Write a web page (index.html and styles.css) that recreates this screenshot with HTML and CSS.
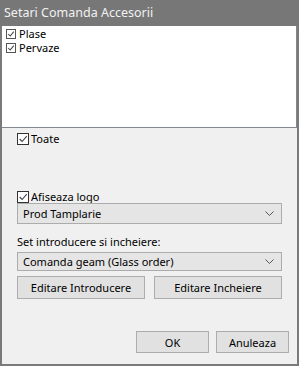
FILE: index.html
```html
<!DOCTYPE html>
<html lang="ro">
<head>
    <meta charset="UTF-8">
    <title>Setari Comanda Accesorii</title>
    <link rel="stylesheet" href="styles.css">
</head>
<body>
    <div class="window">
        <div class="titlebar">Setari Comanda Accesorii</div>
        <div class="list">
            <div class="item"><span class="box small"><svg viewBox="0 0 10 10"><polyline points="1.5,5 4,7.5 8.5,2"/></svg></span>Plase</div>
            <div class="item"><span class="box small"><svg viewBox="0 0 10 10"><polyline points="1.5,5 4,7.5 8.5,2"/></svg></span>Pervaze</div>
        </div>
        <div class="panel">
            <div class="check toate"><span class="box"><svg viewBox="0 0 12 12"><polyline points="2,6 5,9 10.5,2.5"/></svg></span>Toate</div>
            <div class="check logo"><span class="box"><svg viewBox="0 0 12 12"><polyline points="2,6 5,9 10.5,2.5"/></svg></span>Afiseaza logo</div>
            <div class="combo"><span>Prod Tamplarie</span><svg class="arrow" viewBox="0 0 9 5"><polyline points="0.5,0.5 4.5,4.5 8.5,0.5"/></svg></div>
            <div class="label">Set introducere si incheiere:</div>
            <div class="combo second"><span>Comanda geam (Glass order)</span><svg class="arrow" viewBox="0 0 9 5"><polyline points="0.5,0.5 4.5,4.5 8.5,0.5"/></svg></div>
            <div class="btnrow">
                <button class="btn wide">Editare Introducere</button>
                <button class="btn wide">Editare Incheiere</button>
            </div>
            <div class="footer">
                <button class="btn small-btn">OK</button>
                <button class="btn small-btn">Anuleaza</button>
            </div>
        </div>
    </div>
</body>
</html>
```

FILE: styles.css
```css
html, body{
    margin:0;
    padding:0;
}
body{
    font-family:"Noto Sans", "Open Sans", sans-serif;
    font-size:11px;
    color:#000;
}
.window{
    box-sizing:border-box;
    width:299px;
    height:366px;
    background:#f0f0f0;
    border-left:2px solid #7a7a7a;
    border-right:2px solid #7a7a7a;
    border-bottom:2px solid #7a7a7a;
    display:flex;
    flex-direction:column;
}
.titlebar{
    height:26px;
    margin:0 -2px;
    padding-left:4px;
    background:#777777;
    color:#f2f2f2;
    line-height:26px;
    font-size:12.5px;
}
.list{
    box-sizing:border-box;
    height:102px;
    background:#fff;
    border-right:1px solid #828790;
    border-bottom:1px solid #828790;
    padding-top:1px;
    padding-left:4px;
}
.item{
    display:flex;
    align-items:center;
    height:14px;
    line-height:14px;
}
.box{
    box-sizing:border-box;
    width:12px;
    height:12px;
    border:1px solid #333;
    background:#fff;
    margin-right:2px;
    display:flex;
}
.box.small{
    width:10px;
    height:10px;
    border-color:#555;
    margin-right:3px;
}
.box svg{
    width:100%;
    height:100%;
    fill:none;
    stroke:#444;
    stroke-width:1.3;
}
.panel{
    flex:1;
    padding-left:15px;
    display:flex;
    flex-direction:column;
}
.check{
    display:flex;
    align-items:center;
    height:12px;
    line-height:12px;
}
.toate{
    margin-top:5px;
}
.logo{
    margin-top:46px;
}
.combo{
    box-sizing:border-box;
    width:265px;
    height:21px;
    background:#e5e5e5;
    border:1px solid #acacac;
    padding:0 7px 0 5px;
    display:flex;
    align-items:center;
    justify-content:space-between;
}
.arrow{
    width:9px;
    height:5px;
    fill:none;
    stroke:#555;
    stroke-width:1;
}
.label{
    margin-top:8px;
    height:20px;
    line-height:20px;
}
.combo.second{
    height:19px;
}
.btnrow{
    display:flex;
    gap:9px;
    margin-top:5px;
}
.btn{
    box-sizing:border-box;
    font-family:inherit;
    font-size:11px;
    color:#000;
    background:#e1e1e1;
    border:1px solid #adadad;
    padding:0;
    margin:0;
}
.btn.wide{
    width:128px;
    height:23px;
}
.footer{
    display:flex;
    justify-content:flex-end;
    gap:7px;
    margin-top:32px;
    padding-right:8px;
}
.btn.small-btn{
    width:73px;
    height:22px;
}
```
